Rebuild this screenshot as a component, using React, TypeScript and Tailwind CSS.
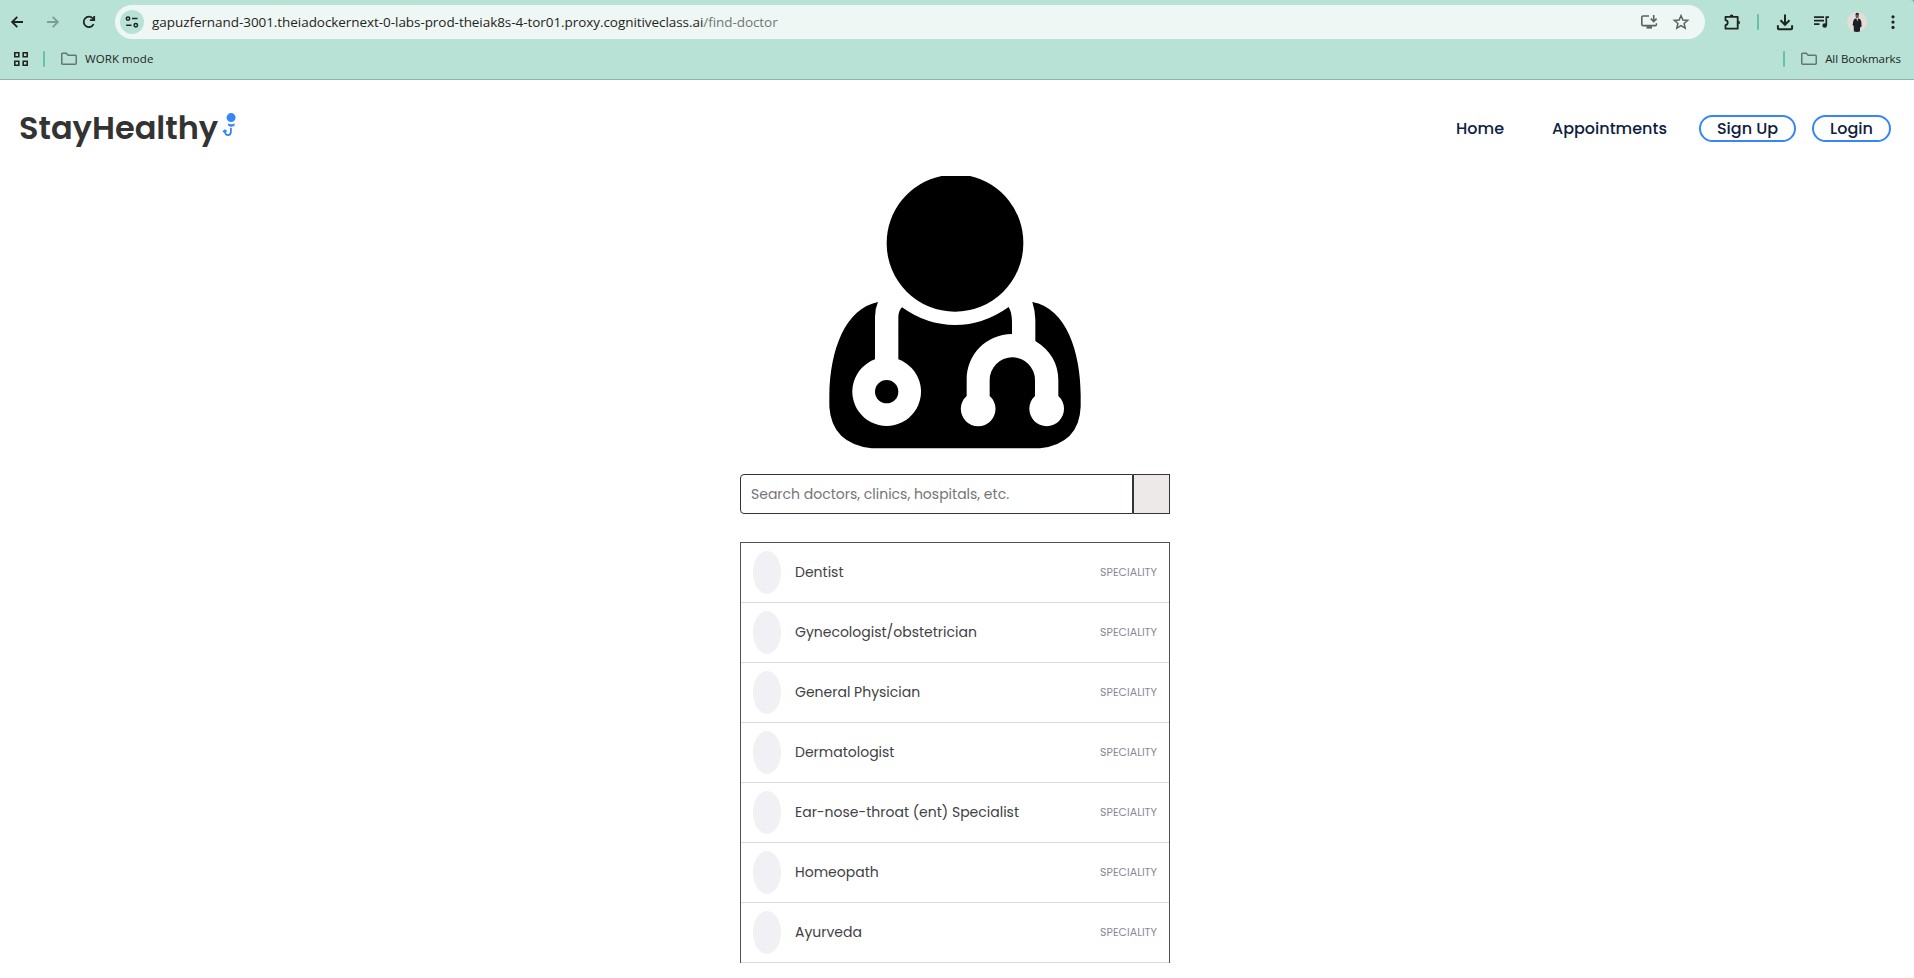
import type { ReactNode } from "react";

const specialities = [
  "Dentist",
  "Gynecologist/obstetrician",
  "General Physician",
  "Dermatologist",
  "Ear-nose-throat (ent) Specialist",
  "Homeopath",
  "Ayurveda",
];

function Icon({ children, className = "" }: { children: ReactNode; className?: string }) {
  return (
    <svg viewBox="0 0 20 20" fill="none" stroke="currentColor" strokeWidth="1.8" className={`size-5 shrink-0 ${className}`}>
      {children}
    </svg>
  );
}

function Folder() {
  return (
    <svg viewBox="0 0 18 14" fill="none" stroke="currentColor" strokeWidth="1.5" className="h-3.5 w-[18px] shrink-0 text-[#66756f]">
      <path d="M1.75 2.2q0-.95.95-.95h3.6l1.8 1.9h7.2q.95 0 .95.95v7.2q0 .95-.95.95H2.7q-.95 0-.95-.95z" />
    </svg>
  );
}

function Divider() {
  return <div className="h-4 w-0.5 shrink-0 rounded-full bg-[#66c2a5]" />;
}

function BrowserBar() {
  return (
    <header className="relative h-20 shrink-0 border-b border-[#8fb5aa] bg-[#b8e2d5] font-['Open_Sans',sans-serif] text-[#1f2421]">
      <div className="flex h-11 items-center pl-[7px] pr-[11px]">
        <Icon>
          <path d="M16 10H5M10.3 4.8 5.1 10l5.2 5.2" />
        </Icon>
        <Icon className="ml-4 text-[#7f9c93]">
          <path d="M4 10h11M9.7 4.8 14.9 10l-5.2 5.2" />
        </Icon>
        <Icon className="ml-4">
          <path d="M14.6 12.2A5.2 5.2 0 1 1 13.8 6.4L15.2 8" />
          <path d="M15.2 4v4.1h-4.3" />
        </Icon>
        <div className="ml-4 flex h-[34px] flex-1 items-center rounded-full bg-[#eff7f4] pl-[5px] pr-3.5">
          <div className="flex size-6 items-center justify-center rounded-full bg-[#b8e2d5]">
            <svg viewBox="0 0 14 12" fill="none" stroke="currentColor" strokeWidth="1.5" className="h-3 w-3.5">
              <circle cx="3" cy="2.6" r="1.7" />
              <path d="M7 2.6h5.5M1.2 9.2h5.3" />
              <circle cx="10.8" cy="9.2" r="1.7" />
            </svg>
          </div>
          <div className="ml-2 whitespace-nowrap pb-px text-[13.5px] leading-5 tracking-[-0.06px]">
            gapuzfernand-3001.theiadockernext-0-labs-prod-theiak8s-4-tor01.proxy.cognitiveclass.ai
            <span className="text-[#6f7774]">/find-doctor</span>
          </div>
          <Icon className="ml-auto text-[#5b6360]">
            <path d="M10 4H4q-1.2 0-1.2 1.2v7.2q0 1.2 1.2 1.2h12.2q1.2 0 1.2-1.2v-1.2" strokeWidth="1.6" />
            <path d="M7.5 15.4h5.5" strokeWidth="2.4" />
            <path d="M14.7 3v6M11.8 6.6l2.9 2.9 2.9-2.9" strokeWidth="1.6" />
          </Icon>
          <Icon className="ml-3 text-[#5b6360]">
            <path d="m10 3.6 1.9 4.4 4.8.4-3.6 3.1 1.1 4.7-4.200-2.500-4.200 2.500 1.100-4.700-3.600-3.100 4.800-.4z" strokeWidth="1.5" />
          </Icon>
        </div>
        <Icon className="ml-[17px]">
          <path d="M3.500 4.800h12.200v11.900H3.500v-3.500q2.200-.4 2.200-2.500T3.500 8.200z" strokeLinejoin="round" />
          <path d="M7.700 4.300a1.900 1.800 0 0 1 3.800 0zM16.200 8.700a1.800 1.900 0 0 1 0 3.800z" fill="currentColor" stroke="none" />
        </Icon>
        <div className="ml-[15px]">
          <Divider />
        </div>
        <Icon className="ml-4">
          <path d="M10 2.5v10M5.5 8.300l4.500 4.500 4.500-4.500M2.900 13.300v3q0 .9.9.9h12.400q.9 0 .9-.9v-3" strokeWidth="2" />
        </Icon>
        <Icon className="ml-[17px]">
          <path d="M2 5.200h10M2 8.700h10M2 12.200h5.500M17 5.200h-2.700v8.200" strokeWidth="1.7" />
          <circle cx="12.7" cy="13.5" r="2.3" fill="currentColor" stroke="none" />
        </Icon>
        <svg viewBox="0 0 20 20" className="ml-[15px] size-5 shrink-0">
          <circle cx="10" cy="10" r="10" fill="#e3ddd7" />
          <path d="M6.200 9.500q.3-2.400 2.300-3h3.200q2.200.6 2.600 3l.3 5-1.500 1-.2 4.100q-3 .8-6 0l-.2-5.500-1.100-1z" fill="#1b1e27" />
          <ellipse cx="10.2" cy="3.8" rx="1.7" ry="2.5" fill="#765649" />
          <path d="M8.400 3q.1-2.200 1.900-2.200T12 3q-1.600-1-3.600 0z" fill="#1d1b1d" />
          <path d="m9.500 6.300.7 3.200.9-3.200z" fill="#f3f3f3" />
        </svg>
        <svg viewBox="0 0 20 20" fill="currentColor" className="ml-4 size-5 shrink-0">
          <circle cx="10" cy="4.8" r="1.6" />
          <circle cx="10" cy="10.1" r="1.6" />
          <circle cx="10" cy="15.4" r="1.6" />
        </svg>
      </div>
      <div className="flex h-[30px] items-center pl-3.5 pr-[13px] text-[11.5px]">
        <svg viewBox="0 0 14 14" fill="none" stroke="currentColor" strokeWidth="1.6" className="size-3.5 shrink-0">
          <path d="M.8.8h4v4h-4zM9.200.8h4v4h-4zM.8 9.200h4v4h-4zM9.200 9.200h4v4h-4z" />
        </svg>
        <div className="ml-[15px]">
          <Divider />
        </div>
        <div className="ml-[15px] flex items-center gap-[7px]">
          <Folder />
          <span className="tracking-[0.08px]">WORK mode</span>
        </div>
        <div className="ml-auto">
          <Divider />
        </div>
        <div className="ml-[15px] flex items-center gap-[7px]">
          <Folder />
          <span className="tracking-[-0.06px]">All Bookmarks</span>
        </div>
      </div>
      <svg viewBox="0 0 4 4" className="absolute right-0 top-0 size-1">
        <path d="M0 0h4v4Q4 0 0 0z" fill="#5fbf9f" />
      </svg>
    </header>
  );
}

function LogoMark() {
  return (
    <svg viewBox="0 0 14 26" className="mb-1.5 ml-1 h-[26px] w-3.5 text-[#3685fb]">
      <circle cx="9.1" cy="5.6" r="4.5" fill="currentColor" />
      <path d="M5.600 11.500q3.600 1.600 7.200 0-.8 3.200-3.700 3.200T5.600 11.500z" fill="currentColor" />
      <path d="M11.300 14.700q1.400-.4 1.600-1.800" fill="none" stroke="currentColor" strokeWidth=".5" />
      <path d="M8.900 15.800v4q0 3.300-3 3.300-2.700 0-3.200-3.900M1.200 20.200l1.500-1.800 2 1.200" fill="none" stroke="currentColor" strokeWidth="1.8" />
    </svg>
  );
}

function Navbar() {
  return (
    <nav className="flex h-24 shrink-0 items-center justify-between pl-[19px] pr-[23px] font-medium text-[#0c213f]">
      <div className="flex items-center text-[32px] font-semibold leading-[48px] text-[#333]">
        StayHealthy
        <LogoMark />
      </div>
      <div className="flex items-center text-base">
        <a className="pt-0.5">Home</a>
        <a className="ml-12 pt-0.5">Appointments</a>
        <button className="ml-8 flex h-[27px] w-[97px] items-center justify-center rounded-full border-2 border-[#3685fb] pt-0.5">Sign Up</button>
        <button className="ml-4 flex h-[27px] w-[79px] items-center justify-center rounded-full border-2 border-[#3685fb] pt-0.5">Login</button>
      </div>
    </nav>
  );
}

function DoctorArt() {
  return (
    <svg viewBox="0 0 870 900" className="h-[300px] w-[290px] shrink-0">
      <path d="M395 48h85A205 205 0 0 1 640 250A205 205 0 0 1 230 250A205 205 0 0 1 395 48z" />
      <path d="M204 426Q195 446 195 470V598A103 103 0 1 0 265 598V470Q266 452 276 442Q350 495 435 495T596 441Q606 458 606 485V522C528 524 470 582 470 660V708A52 52 0 1 0 539 708V660A68 68 0 0 1 675 660V708A52 52 0 1 0 745 708V660Q744 585 676 543V480Q675 450 667 426C770 444 812 580 812 705V740Q808 850 690 865H185Q65 850 58 740V705C60 570 105 446 204 426z" />
      <circle cx="230" cy="695" r="35" />
    </svg>
  );
}

export default function App() {
  return (
    <div className="flex h-[978px] flex-col overflow-hidden bg-white font-['Poppins',Inter,sans-serif]">
      <BrowserBar />
      <Navbar />
      <main className="-mt-4 flex flex-col items-center pr-1">
        <div className="flex w-[430px] flex-col">
          <div className="flex pl-[70px]">
            <DoctorArt />
          </div>
          <div className="mt-3.5 flex h-10">
            <input
              placeholder="Search doctors, clinics, hospitals, etc."
              className="min-w-0 flex-1 rounded-l border border-[#333338] px-2.5 text-sm outline-none placeholder:text-[#757575]"
            />
            <button aria-label="Search" className="w-[37px] border border-[#333338] bg-[#eee9e9]" />
          </div>
          <ul className="mt-7 flex flex-col border-x border-t border-[#505055]">
            {specialities.map((name) => (
              <li key={name} className="flex h-[60px] items-center border-b border-[#dcdcdd] px-3">
                <span className="h-[43px] w-7 rounded-[50%] bg-[#f0f0f5]" />
                <span className="mb-px ml-3.5 text-sm text-[#414146]">{name}</span>
                <span className="mb-px ml-auto text-[11px] text-[#888894]">SPECIALITY</span>
              </li>
            ))}
          </ul>
        </div>
      </main>
    </div>
  );
}
